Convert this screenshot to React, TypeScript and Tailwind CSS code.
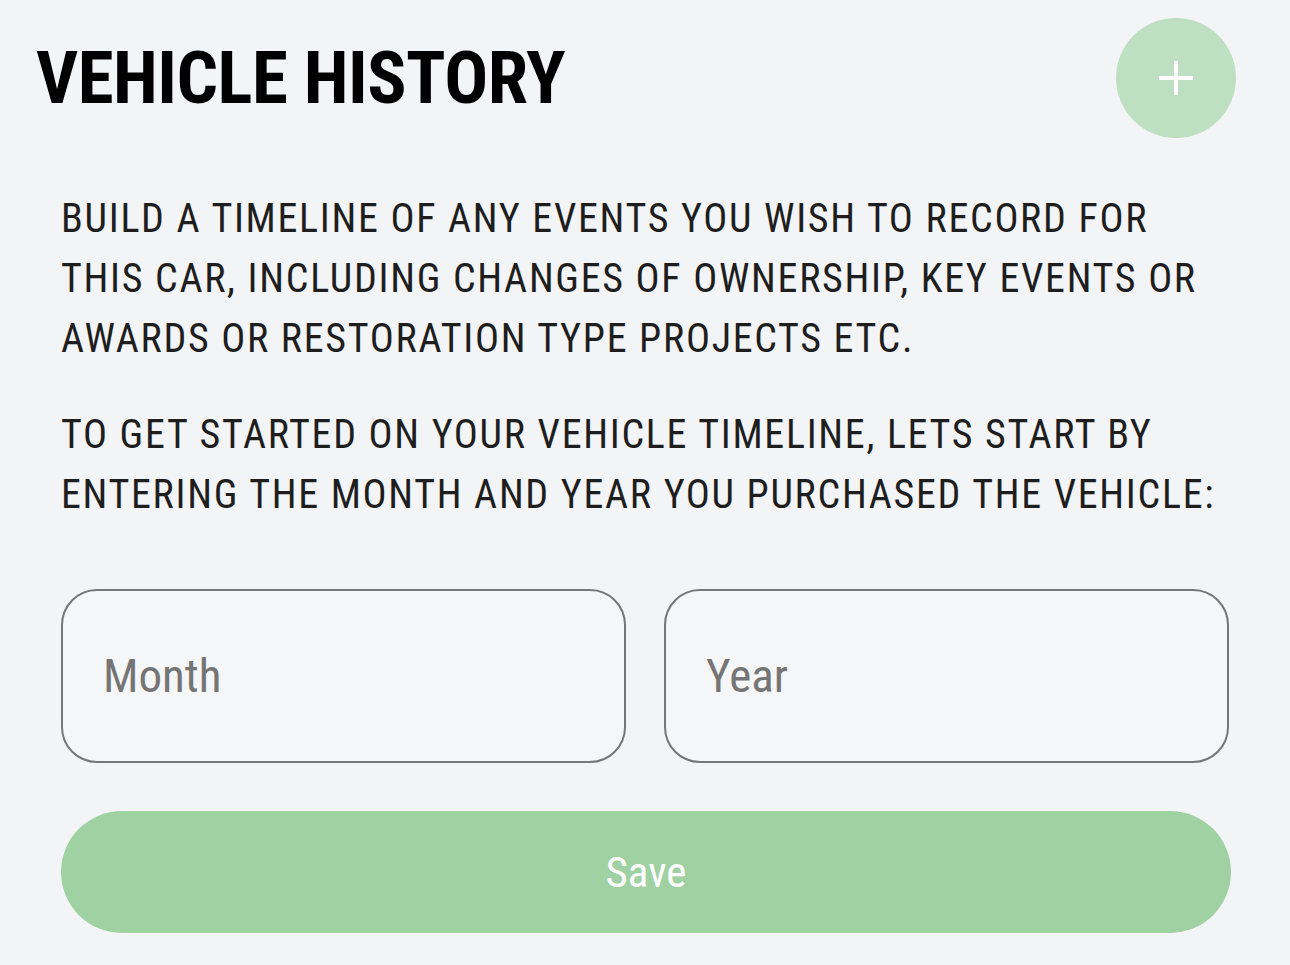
import React from "react";

export default function App() {
  const font = { fontFamily: '"Roboto Condensed", Roboto, "Liberation Sans", sans-serif' };
  return (
    <div className="min-h-[965px] w-[1290px] bg-[#f2f4f6] font-stretch-condensed" style={font}>
      <div className="flex items-center justify-between pl-[36px] pr-[54px] pt-[18px]">
        <h1 className="text-[73px] font-bold leading-none tracking-[-0.5px] text-black">VEHICLE HISTORY</h1>
        <button className="flex h-[120px] w-[120px] items-center justify-center rounded-full bg-[#bfdfc2]">
          <svg width="38" height="38" viewBox="0 0 38 38">
            <path d="M19 2v34M2 19h34" stroke="white" strokeWidth="4" />
          </svg>
        </button>
      </div>
      <div className="px-[61px]">
        <p className="mt-[51px] text-[40px] leading-[60px] tracking-[1.7px] text-[#1e1e1e]">
          BUILD A TIMELINE OF ANY EVENTS YOU WISH TO RECORD FOR THIS CAR, INCLUDING CHANGES OF OWNERSHIP, KEY EVENTS OR AWARDS OR RESTORATION TYPE PROJECTS ETC.
        </p>
        <p className="mt-[36px] text-[40px] leading-[60px] tracking-[1.7px] text-[#1e1e1e]">
          TO GET STARTED ON YOUR VEHICLE TIMELINE, LETS START BY ENTERING THE MONTH AND YEAR YOU PURCHASED THE VEHICLE:
        </p>
        <div className="mt-[64px] flex gap-[38px]">
          <div className="flex h-[174px] w-[566px] items-center rounded-[36px] border-2 border-[#767676] bg-[#f5f6f7] pl-[40px]">
            <span className="text-[47px] text-[#757575]">Month</span>
          </div>
          <div className="flex h-[174px] w-[566px] items-center rounded-[36px] border-2 border-[#767676] bg-[#f5f6f7] pl-[40px]">
            <span className="text-[47px] text-[#757575]">Year</span>
          </div>
        </div>
        <button className="mt-[48px] flex h-[122px] w-[1170px] items-center justify-center rounded-full bg-[#a0d1a2]">
          <span className="text-[43px] text-white">Save</span>
        </button>
      </div>
    </div>
  );
}
